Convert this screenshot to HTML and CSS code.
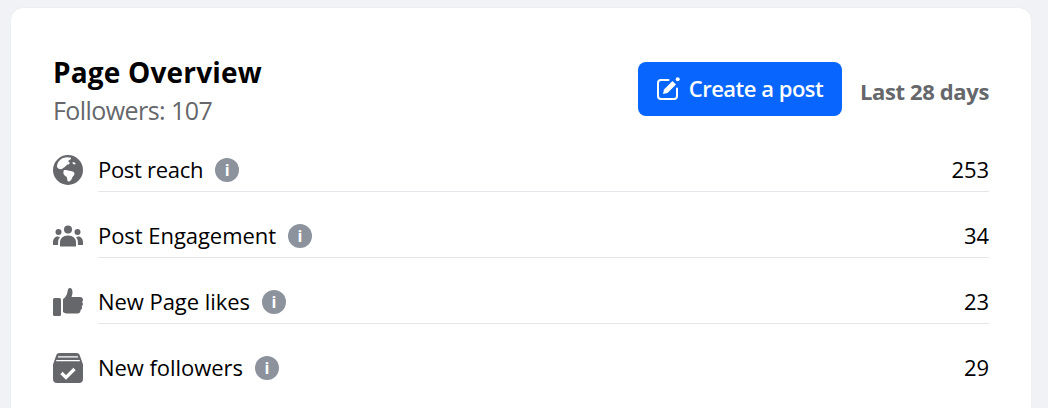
FILE: index.html
```html
<!DOCTYPE html>
<html>

<head>
	<title>Page Overview</title>
	<link rel="stylesheet" href="styles.css">
</head>

<body>
	<div class="card">
		<div class="head">
			<div class="head-left">
				<h2 class="title">Page Overview</h2>
				<div class="followers">Followers: 107</div>
			</div>
			<div class="head-right">
				<button class="post-btn">
					<svg class="post-icon" viewBox="0 0 23 23" width="23" height="23">
						<path d="M11.500 3H4a3 3 0 0 0-3 3v13a3 3 0 0 0 3 3h13a3 3 0 0 0 3-3v-7.500" fill="none" stroke="#fff" stroke-width="2" stroke-linecap="round"/>
						<path d="M6 17l1-4.500 8.500-8.500 3.500 3.500-8.500 8.500z" fill="#fff"/>
						<circle cx="20.700" cy="2.300" r="2" fill="#fff"/>
					</svg>
					Create a post
				</button>
				<span class="period">Last 28 days</span>
			</div>
		</div>

		<div class="row">
			<svg class="row-icon" viewBox="0 0 30 30" width="30" height="30">
				<circle cx="15" cy="15" r="15" fill="#65676b"/>
				<path d="M10 3c2.500-1 6-1 8-.2.500 1-.8 2.200-2.500 2.700-.6.900.6 1.600 1.200 2.300.2 1.200-1 1.900-2.200 1.800-1.200.3-1.500 1.900-2.700 2.400-1.400.5-2 2-3.800 2.200C6 14.200 4 13 4 11.500 4 8 6.500 4.500 10 3z" fill="#fff"/>
				<path d="M10 15.500c2-.8 4-.4 6.200.3 1.800.3 4 .3 5 1.900.8 1.300-.3 2.800-1.300 3.800-.8 1-1 2.500-1.800 3.500-.8 1-2.300 2-3.400 1.300-.6-1.300-.3-3.100-1-4.300-1.300-.8-3-1.900-3.300-3.700-.2-1 .2-2 .6-2.800z" fill="#fff"/>
				<path d="M19.500 7.500c1-.4 2.500.2 3 1 .2.900-1 1.100-1.800.8-.7-.3-1.400-1-1.200-1.800z" fill="#fff"/>
			</svg>
			<div class="row-body">
				<span class="label tight">Post reach</span>
				<span class="info">i</span>
				<span class="value">253</span>
			</div>
		</div>

		<div class="row">
			<svg class="row-icon" viewBox="0 0 30 30" width="30" height="30">
				<circle cx="15" cy="8.500" r="4" fill="#65676b"/>
				<circle cx="5.500" cy="11" r="3" fill="#65676b"/>
				<circle cx="24.500" cy="11" r="3" fill="#65676b"/>
				<path d="M7 25.500v-4c0-4 3-7 8-7s8 3 8 7v4z" fill="#65676b"/>
				<path d="M0 24v-3c0-3 2-5.500 4.500-5.500 1 0 1.800.2 2.500.6-1.300 1.400-1.900 3.200-1.900 5.400v2.500z" fill="#65676b"/>
				<path d="M30 24v-3c0-3-2-5.500-4.500-5.500-1 0-1.800.2-2.500.6 1.300 1.400 1.900 3.200 1.900 5.400v2.500z" fill="#65676b"/>
			</svg>
			<div class="row-body">
				<span class="label">Post Engagement</span>
				<span class="info">i</span>
				<span class="value">34</span>
			</div>
		</div>

		<div class="row">
			<svg class="row-icon" viewBox="0 0 30 30" width="30" height="30">
				<rect x="0" y="11" width="8" height="18" rx="1.500" fill="#65676b"/>
				<path d="M10 28V12c2-1 4-4 4.500-7 .2-2 .7-4 2.300-4 2 0 2.700 2 2.700 4.500 0 1.700-.5 3-1 4.500h8.500c1.800 0 3 1.200 3 2.800 0 1-.4 1.700-.9 2.200.6.600.8 1.300.8 2 0 1-.5 1.800-1.200 2.300.3.500.4 1 .3 1.600-.1 1-.8 1.700-1.500 2.100.2 2-1 3.500-3 3.500H15c-2 0-3.500-.5-5-1.500z" fill="#65676b"/>
			</svg>
			<div class="row-body">
				<span class="label">New Page likes</span>
				<span class="info">i</span>
				<span class="value">23</span>
			</div>
		</div>

		<div class="row">
			<svg class="row-icon" viewBox="0 0 30 30" width="30" height="30">
				<path d="M6.500 0h17c2 0 3 1 3.500 3L30 11.500V26c0 2.500-1.500 4-4 4H4c-2.500 0-4-1.500-4-4V11.500L3 3c.5-2 1.500-3 3.500-3z" fill="#65676b"/>
				<path d="M5 3.800h20M3.200 7.600h23.600" fill="none" stroke="#fff" stroke-width="1.300"/>
				<path d="M8.500 20l4.500 4.500 8.500-8.500" fill="none" stroke="#fff" stroke-width="3.200"/>
			</svg>
			<div class="row-body last">
				<span class="label">New followers</span>
				<span class="info">i</span>
				<span class="value">29</span>
			</div>
		</div>
	</div>
</body>

</html>
```

FILE: styles.css
```css
html,
body {
	height: 100%;
}

body {
	margin: 0;
	padding: 8px 17px 0 11px;
	box-sizing: border-box;
	overflow: hidden;
	background-color: #f0f2f5;
	font-family: "Open Sans", "Noto Sans", sans-serif;
	color: #000000;
}

.card {
	background-color: #ffffff;
	border-radius: 12px 12px 0 0;
	padding: 0 42px;
	height: 100%;
	overflow: hidden;
	box-shadow: 0 0 1px rgba(0, 0, 0, 0.12);
}

.head {
	display: flex;
	justify-content: space-between;
	align-items: flex-start;
	height: 141px;
}

.title {
	margin: 44px 0 0 0;
	font-size: 28px;
	line-height: 40px;
	font-weight: 700;
	color: #000000;
	letter-spacing: 0.18px;
}

.followers {
	font-size: 25px;
	line-height: 36px;
	color: #65676b;
	letter-spacing: -0.57px;
}

.head-right {
	display: flex;
	align-items: center;
	gap: 18px;
	margin-top: 54px;
}

.post-btn {
	display: flex;
	align-items: center;
	justify-content: center;
	gap: 9px;
	width: 204px;
	height: 54px;
	padding: 0 0 2px 0;
	border: none;
	border-radius: 8px;
	background-color: #0866ff;
	color: #ffffff;
	font-family: inherit;
	font-size: 22px;
	font-weight: 600;
	letter-spacing: -0.5px;
}

.post-icon {
	flex: none;
}

.period {
	font-size: 22px;
	font-weight: 700;
	color: #65676b;
	letter-spacing: -0.37px;
	margin-top: 4px;
}

.row {
	display: flex;
	align-items: flex-start;
	gap: 15px;
	height: 66px;
}

.row-icon {
	flex: none;
	margin-top: 6px;
}

.row-body {
	flex: 1;
	display: flex;
	align-items: center;
	height: 42px;
	border-bottom: 1px solid #e4e6eb;
}

.row-body.last {
	border-bottom: none;
}

.label {
	font-size: 22px;
	line-height: 40px;
	margin-top: -2px;
	letter-spacing: -0.05px;
}

.label.tight {
	letter-spacing: -0.3px;
}

.info {
	display: flex;
	align-items: center;
	justify-content: center;
	width: 24px;
	height: 24px;
	margin-left: 12px;
	border-radius: 50%;
	background-color: #8c939d;
	color: #ffffff;
	font-size: 16px;
	font-weight: 700;
}

.value {
	margin-left: auto;
	font-size: 22px;
	line-height: 40px;
	margin-top: -2px;
	letter-spacing: -0.1px;
}
```
